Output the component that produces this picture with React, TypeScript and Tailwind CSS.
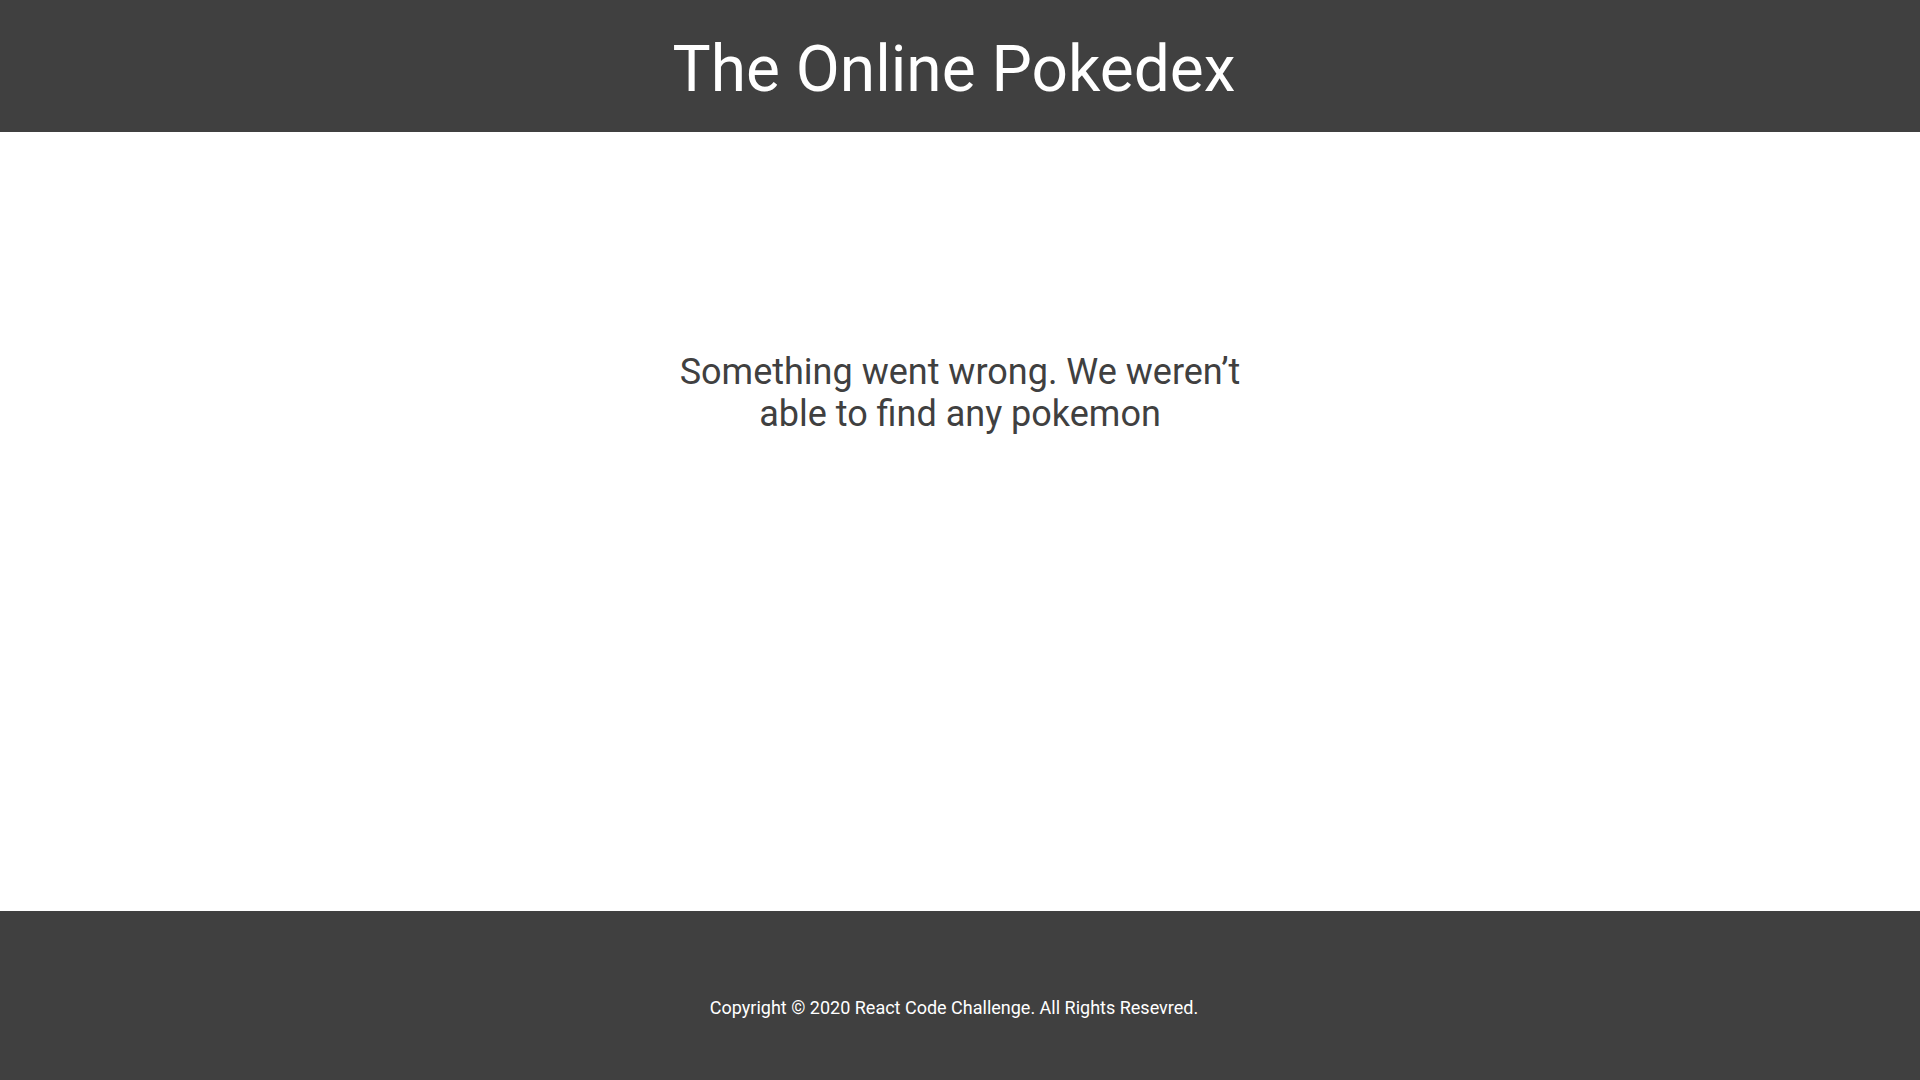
import React from 'react'

const App = () => {
    return (
        <div className="min-h-screen flex flex-col bg-white font-['Roboto',sans-serif]">
            <header className="bg-[#404040] h-[132px] flex items-center justify-center pt-[7px] pr-3">
                <h1 className="text-white text-[64px] leading-none">The Online Pokedex</h1>
            </header>
            <main className="h-[779px] flex justify-center pt-[219px]">
                <p className="text-[#404040] text-[36px] leading-[42px] text-center max-w-[600px]">
                    Something went wrong. We weren’t able to find any pokemon
                </p>
            </main>
            <footer className="bg-[#404040] h-[169px] flex items-center justify-center pt-6 pr-3">
                <p className="text-white text-[18px]">
                    Copyright © 2020 React Code Challenge. All Rights Resevred.
                </p>
            </footer>
        </div>
    )
}

export default App
